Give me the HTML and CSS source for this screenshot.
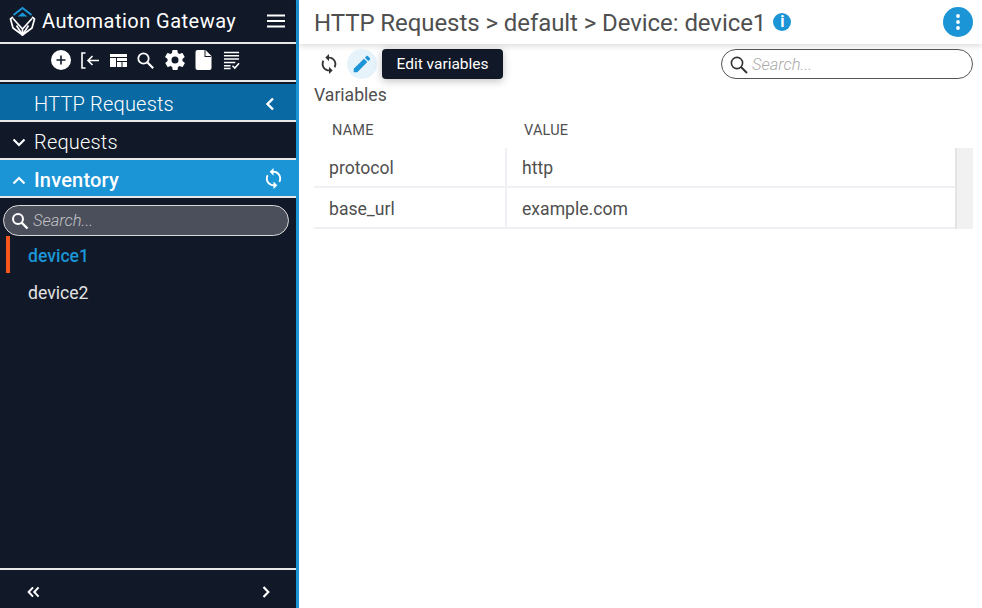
FILE: index.html
```html
<!DOCTYPE html>
<html lang="en">

<head>
    <meta charset="UTF-8">
    <title>Automation Gateway</title>
    <link rel="stylesheet" href="styles.css">
</head>

<body>
    <aside class="sidebar">
        <div class="brand">
            <svg class="logo" width="27" height="30" viewBox="0 0 27 30" fill="none">
                <path d="M4.5 9 13.5 2 22.5 9" stroke="#1b95d6" stroke-width="2"/>
                <path d="M8.5 10.5 13.5 6.5 18.5 10.5Z" fill="#1b95d6"/>
                <path d="M4 11 1.5 13 4 22 13.5 29 23 22 25.5 13 23 11" stroke="#fff" stroke-width="1.7" stroke-linejoin="round"/>
                <path d="M4 12.5 13.5 23 23 12.5M13.5 23V29M7.5 19.5 13.5 29 19.5 19.5" stroke="#fff" stroke-width="1.7"/>
            </svg>
            <span class="brand-name">Automation Gateway</span>
            <svg class="burger" width="18" height="14" viewBox="0 0 18 14">
                <path d="M0 1.5H18M0 7H18M0 12.5H18" stroke="#fff" stroke-width="2.2"/>
            </svg>
        </div>

        <div class="tools">
            <svg width="20" height="20" viewBox="0 0 20 20">
                <circle cx="10" cy="10" r="10" fill="#fff"/>
                <path d="M5.5 10H14.5M10 5.5V14.5" stroke="#111827" stroke-width="1.6"/>
            </svg>
            <svg width="18" height="17" viewBox="0 0 18 17" fill="none">
                <path d="M4.5 1H1V16H4.5" stroke="#fff" stroke-width="1.6"/>
                <path d="M18 8.5H7.5M11.5 4 7 8.5 11.5 13" stroke="#fff" stroke-width="1.6"/>
            </svg>
            <svg width="17" height="13" viewBox="0 0 17 13">
                <path d="M0 0H17V3H0ZM0 4H6V13H0ZM7 4H17V7H7ZM7 8H11.5V13H7ZM12.5 8H17V13H12.5Z" fill="#fff"/>
            </svg>
            <svg width="17" height="17" viewBox="0 0 17 17" fill="none">
                <circle cx="6.5" cy="6.5" r="5.2" stroke="#fff" stroke-width="1.8"/>
                <path d="M10.5 10.5 16.2 16.2" stroke="#fff" stroke-width="2.2"/>
            </svg>
            <svg width="20" height="20" viewBox="2 2 20 20">
                <path fill="#fff" d="M19.4 13c.1-.3.1-.7.1-1s0-.7-.1-1l2.1-1.7c.2-.2.2-.4.1-.6l-2-3.5c-.1-.2-.4-.3-.6-.2l-2.5 1c-.5-.4-1.1-.7-1.7-1l-.4-2.6c0-.2-.2-.4-.5-.4h-4c-.2 0-.5.2-.5.4l-.4 2.6c-.6.3-1.2.6-1.7 1l-2.5-1c-.2-.1-.5 0-.6.2l-2 3.5c-.1.2-.1.5.1.6L4.6 11c0 .3-.1.7-.1 1s0 .7.1 1l-2.1 1.7c-.2.2-.2.4-.1.6l2 3.5c.1.2.4.3.6.2l2.5-1c.5.4 1.1.7 1.7 1l.4 2.6c0 .2.3.4.5.4h4c.3 0 .5-.2.5-.4l.4-2.6c.6-.3 1.2-.6 1.7-1l2.5 1c.2.1.5 0 .6-.2l2-3.5c.1-.2.1-.5-.1-.6ZM12 15.5a3.5 3.5 0 1 1 0-7 3.5 3.5 0 0 1 0 7Z"/>
            </svg>
            <svg width="17" height="20" viewBox="0 0 16 20">
                <path fill="#fff" d="M2 0H10L16 6V18a2 2 0 0 1-2 2H2a2 2 0 0 1-2-2V2a2 2 0 0 1 2-2Z"/>
                <path fill="#111827" d="M10 0V6H16L15 7H9V0Z"/>
            </svg>
            <svg width="17" height="19" viewBox="0 0 18 19" fill="none">
                <path d="M1 1H17M1 4.5H17M1 8H17M1 11.5H13M1 15H8M1 18H8" stroke="#fff" stroke-width="1.6"/>
                <path d="M10 15 12.5 17.5 17 12.5" stroke="#fff" stroke-width="1.6"/>
            </svg>
        </div>

        <div class="section section-title">
            <span>HTTP Requests</span>
            <svg width="10" height="14" viewBox="0 0 10 14" fill="none">
                <path d="M8 1.5 2.5 7 8 12.5" stroke="#fff" stroke-width="2.4"/>
            </svg>
        </div>

        <div class="section section-dark">
            <svg class="chevron" width="14" height="9" viewBox="0 0 14 9" fill="none">
                <path d="M1.5 1.5 7 7 12.5 1.5" stroke="#fff" stroke-width="2.2"/>
            </svg>
            <span>Requests</span>
        </div>

        <div class="section section-active">
            <svg class="chevron" width="14" height="9" viewBox="0 0 14 9" fill="none">
                <path d="M1.5 7.5 7 2 12.5 7.5" stroke="#fff" stroke-width="2.2"/>
            </svg>
            <span class="section-name">Inventory</span>
            <svg class="sync" width="23" height="23" viewBox="0 0 24 24">
                <path fill="#fff" d="M12 4V1L8 5l4 4V6c3.3 0 6 2.7 6 6 0 1-.3 2-.7 2.8l1.5 1.5C19.5 15 20 13.6 20 12c0-4.4-3.6-8-8-8Zm0 14c-3.3 0-6-2.7-6-6 0-1 .3-2 .7-2.8L5.2 7.7C4.5 9 4 10.4 4 12c0 4.4 3.6 8 8 8v3l4-4-4-4v3Z"/>
            </svg>
        </div>

        <div class="side-search">
            <svg width="18" height="18" viewBox="0 0 18 18" fill="none">
                <circle cx="7" cy="7" r="5" stroke="#fff" stroke-width="2"/>
                <path d="M10.5 10.5 16.5 16.5" stroke="#fff" stroke-width="2.4"/>
            </svg>
            <span>Search...</span>
        </div>

        <ul class="devices">
            <li class="device device-current">device1</li>
            <li class="device">device2</li>
        </ul>

        <div class="side-footer">
            <svg width="13" height="12" viewBox="0 0 14 12" fill="none">
                <path d="M6.5 1 1.8 6 6.5 11M12.5 1 7.8 6 12.5 11" stroke="#fff" stroke-width="2.2"/>
            </svg>
            <svg width="8" height="12" viewBox="0 0 8 12" fill="none">
                <path d="M1.5 1 6.3 6 1.5 11" stroke="#fff" stroke-width="2.2"/>
            </svg>
        </div>
    </aside>

    <main class="content">
        <header class="topbar">
            <h1>HTTP Requests &gt; default &gt; Device: device1</h1>
            <span class="info">i</span>
            <span class="menu-button">
                <svg width="4" height="16" viewBox="0 0 4 16" fill="#fff">
                    <circle cx="2" cy="2" r="1.9"/>
                    <circle cx="2" cy="8" r="1.9"/>
                    <circle cx="2" cy="14" r="1.9"/>
                </svg>
            </span>
        </header>

        <div class="actions">
            <span class="action">
                <svg width="22" height="22" viewBox="0 0 24 24">
                    <path fill="#333" d="M12 4V1L8 5l4 4V6c3.3 0 6 2.7 6 6 0 1-.3 2-.7 2.8l1.5 1.5C19.5 15 20 13.6 20 12c0-4.4-3.6-8-8-8Zm0 14c-3.3 0-6-2.7-6-6 0-1 .3-2 .7-2.8L5.2 7.7C4.5 9 4 10.4 4 12c0 4.4 3.6 8 8 8v3l4-4-4-4v3Z"/>
                </svg>
            </span>
            <span class="action action-hover">
                <svg width="22" height="22" viewBox="0 0 24 24">
                    <path fill="#1b95d6" d="M3 17.2V21h3.8L17.8 9.9l-3.7-3.7ZM20.7 7c.4-.4.4-1 0-1.4l-2.3-2.3c-.4-.4-1-.4-1.4 0l-1.8 1.8 3.7 3.7Z"/>
                </svg>
                <span class="tooltip">Edit variables</span>
            </span>
            <div class="search">
                <svg width="20" height="20" viewBox="0 0 20 20" fill="none">
                    <circle cx="8" cy="8" r="5.6" stroke="#333" stroke-width="1.6"/>
                    <path d="M12 12 18 18" stroke="#333" stroke-width="2"/>
                </svg>
                <span>Search...</span>
            </div>
        </div>

        <h2 class="table-title">Variables</h2>

        <div class="table">
            <div class="table-main">
                <div class="cell-head">NAME</div>
                <div class="cell-head">VALUE</div>
                <div class="cell first">protocol</div>
                <div class="cell">http</div>
                <div class="cell first">base_url</div>
                <div class="cell">example.com</div>
            </div>
            <div class="scroll-track"></div>
        </div>
    </main>
</body>

</html>
```

FILE: styles.css
```css
* {
    box-sizing: border-box;
}

body {
    margin: 0;
    height: 608px;
    overflow: hidden;
    display: flex;
    font-family: Roboto, sans-serif;
    background-color: #fff;
    color: #4f4f4f;
}

.sidebar {
    width: 299px;
    height: 608px;
    flex-shrink: 0;
    display: flex;
    flex-direction: column;
    background-color: #111827;
    border-right: 3px solid #1b95d6;
    color: #fff;
}

.brand {
    height: 44px;
    flex-shrink: 0;
    display: flex;
    align-items: center;
    padding: 0 11px 0 9px;
    border-bottom: 2px solid #e8e8e8;
}

.brand-name {
    margin-left: 6px;
    font-size: 20px;
    letter-spacing: 0.47px;
    flex-grow: 1;
}

.tools {
    height: 38px;
    flex-shrink: 0;
    display: flex;
    align-items: center;
    justify-content: center;
    gap: 10.5px;
    padding: 0 6px 4px 0;
    border-bottom: 2px solid #e8e8e8;
}

.section {
    height: 38px;
    flex-shrink: 0;
    display: flex;
    align-items: center;
    font-size: 20px;
    letter-spacing: 0.2px;
    padding-top: 4px;
    border-bottom: 2px solid #e8e8e8;
}

.section-title {
    justify-content: space-between;
    padding-left: 34px;
    padding-right: 21px;
    margin-top: 2px;
    background-color: #0869a3;
    font-weight: 300;
}

.section-dark {
    padding-left: 12px;
    gap: 8px;
    font-weight: 300;
}

.section-active {
    padding-left: 12px;
    padding-right: 11px;
    gap: 8px;
    background-color: #1b95d6;
    font-weight: 500;
}

.section-active .sync {
    margin-top: -3px;
}

.section-name {
    flex-grow: 1;
}

.side-search {
    height: 31px;
    flex-shrink: 0;
    margin: 7px 7px 0 3px;
    padding-left: 7px;
    display: flex;
    align-items: center;
    gap: 4px;
    background-color: #4b4f5c;
    border: 1px solid #d8d8d8;
    border-radius: 16px;
    font-size: 16.5px;
    font-style: italic;
    font-weight: 300;
    color: #c4c4c4;
}

.devices {
    list-style: none;
    margin: 0;
    padding: 0;
    flex-grow: 1;
}

.device {
    height: 37px;
    line-height: 40px;
    padding-left: 28px;
    font-size: 17.6px;
    color: #e4e4e4;
}

.device-current {
    color: #1b95d6;
    font-weight: 500;
    background: linear-gradient(#f4561d, #f4561d) 6px 0 / 4px 100% no-repeat;
}

.side-footer {
    height: 40px;
    flex-shrink: 0;
    display: flex;
    align-items: center;
    justify-content: space-between;
    padding: 6px 26px 0 27px;
    border-top: 2px solid #e8e8e8;
}

.content {
    flex-grow: 1;
    min-width: 0;
    display: flex;
    flex-direction: column;
}

.topbar {
    height: 44px;
    flex-shrink: 0;
    display: flex;
    align-items: center;
    padding: 0 9px 0 15px;
    box-shadow: 0 2px 6px rgba(0, 0, 0, 0.15);
}

.topbar h1 {
    margin: 2px 0 0;
    font-size: 24px;
    font-weight: 400;
    letter-spacing: -0.07px;
}

.info {
    width: 18px;
    height: 18px;
    margin-left: 7px;
    border-radius: 50%;
    background-color: #1b95d6;
    color: #fff;
    font-size: 16px;
    font-weight: 700;
    line-height: 18px;
    text-align: center;
}

.menu-button {
    width: 30px;
    height: 30px;
    margin-left: auto;
    border-radius: 50%;
    background-color: #1b95d6;
    display: flex;
    align-items: center;
    justify-content: center;
}

.actions {
    height: 30px;
    flex-shrink: 0;
    margin-top: 5px;
    padding: 0 9px 0 15px;
    display: flex;
    align-items: center;
    gap: 3px;
}

.action {
    position: relative;
    width: 30px;
    height: 30px;
    display: flex;
    align-items: center;
    justify-content: center;
    border-radius: 50%;
}

.action-hover {
    background-color: #e6f3fb;
}

.tooltip {
    position: absolute;
    top: 0;
    left: 35px;
    width: 121px;
    height: 30px;
    line-height: 31px;
    text-align: center;
    border-radius: 4px;
    background-color: #111827;
    color: #fff;
    font-size: 15.5px;
    box-shadow: 0 2px 8px rgba(0, 0, 0, 0.25);
}

.search {
    width: 252px;
    height: 30px;
    margin-left: auto;
    padding: 1px 0 0 7px;
    display: flex;
    align-items: center;
    gap: 3px;
    border: 1px solid #555;
    border-radius: 15px;
    font-size: 16.5px;
    font-style: italic;
    font-weight: 300;
    color: #aaa;
}

.table-title {
    margin: 4px 0 0 15px;
    font-size: 17.6px;
    font-weight: 400;
    line-height: 24px;
}

.table {
    margin: 0 9px 0 15px;
    display: flex;
}

.table-main {
    flex-grow: 1;
    display: grid;
    grid-template-columns: 193px 1fr;
    grid-template-rows: 41px 40px 41px;
}

.cell-head {
    padding: 15px 0 0 18px;
    font-size: 14.5px;
    letter-spacing: 0.2px;
}

.cell-head + .cell-head {
    padding-left: 17px;
}

.cell {
    display: flex;
    align-items: center;
    padding: 2px 0 0 15px;
    font-size: 17.6px;
    border-bottom: 2px solid #eef0f3;
}

.first {
    border-right: 2px solid #eef0f3;
}

.scroll-track {
    width: 18px;
    margin-top: 41px;
    background-color: #f1f1f1;
    border-left: 2px solid #e4e4e4;
}
```
